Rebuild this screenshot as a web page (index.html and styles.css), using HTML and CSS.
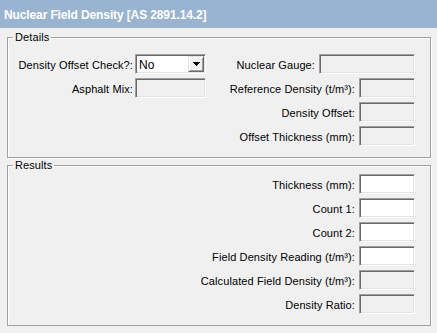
FILE: index.html
```html
<!DOCTYPE html>
<html lang="en">
<head>
    <meta charset="UTF-8">
    <meta name="viewport" content="width=device-width, initial-scale=1.0">
    <title>Nuclear Field Density</title>
    <link rel="stylesheet" href="styles.css">
</head>
<body>
    <div class="titlebar">Nuclear Field Density [AS 2891.14.2]</div>

    <fieldset class="group details">
        <legend>Details</legend>
        <div class="details-grid">
            <label class="lbl-left" for="offsetCheck">Density Offset Check?:</label>
            <div class="combo" id="offsetCheck">
                <span class="combo-text">No</span>
                <span class="combo-btn">
                    <svg width="7" height="4" viewBox="0 0 7 4"><path d="M0 0h7v1h-1v1h-1v1h-1v1h-1v-1h-1v-1h-1v-1h-1z" fill="#000"/></svg>
                </span>
            </div>
            <div class="gauge-row">
                <label for="gauge">Nuclear Gauge:</label>
                <input type="text" id="gauge" class="box locked wide" readonly>
            </div>

            <label class="lbl-left" for="asphalt">Asphalt Mix:</label>
            <input type="text" id="asphalt" class="box locked mid" readonly>
            <label class="lbl-right" for="refDensity">Reference Density (t/m³):</label>
            <input type="text" id="refDensity" class="box locked" readonly>

            <label class="lbl-right col3" for="densOffset">Density Offset:</label>
            <input type="text" id="densOffset" class="box locked" readonly>

            <label class="lbl-right col3" for="offThick">Offset Thickness (mm):</label>
            <input type="text" id="offThick" class="box locked" readonly>
        </div>
    </fieldset>

    <fieldset class="group results">
        <legend>Results</legend>
        <div class="results-grid">
            <label class="lbl-right" for="thickness">Thickness (mm):</label>
            <input type="text" id="thickness" class="box">

            <label class="lbl-right" for="count1">Count 1:</label>
            <input type="text" id="count1" class="box">

            <label class="lbl-right" for="count2">Count 2:</label>
            <input type="text" id="count2" class="box">

            <label class="lbl-right" for="fdr">Field Density Reading (t/m³):</label>
            <input type="text" id="fdr" class="box">

            <label class="lbl-right" for="cfd">Calculated Field Density (t/m³):</label>
            <input type="text" id="cfd" class="box locked" readonly>

            <label class="lbl-right" for="ratio">Density Ratio:</label>
            <input type="text" id="ratio" class="box locked" readonly>
        </div>
    </fieldset>
</body>
</html>
```

FILE: styles.css
```css
body {
    font-family: "Liberation Sans", Arial, sans-serif;
    font-size: 11px;
    letter-spacing: 0.1px;
    color: #000;
    background-color: #f0f0f0;
    margin: 0;
    padding: 0;
}
.titlebar {
    height: 26px;
    padding: 2px 0 0 4px;
    line-height: 26px;
    background-color: #99b4d1;
    color: #fff;
    font-size: 12px;
    font-weight: bold;
    letter-spacing: -0.12px;
    white-space: nowrap;
}
.group {
    margin: 2px 6px 0 7px;
    padding: 9px 15px 11px 0;
    border: 1px solid #a0a0a0;
    box-shadow: 1px 1px 0 #fff, inset 1px 1px 0 #fff;
    min-width: 0;
}
.group legend {
    margin-left: 5px;
    padding: 0 2px;
    line-height: 15px;
}
.results {
    margin-top: 0;
    padding-top: 1px;
}
.details-grid {
    display: grid;
    grid-template-columns: 127px 71px 1fr 56px;
    grid-auto-rows: 20px;
    row-gap: 4px;
    align-items: center;
}
.results-grid {
    display: grid;
    grid-template-columns: 1fr 56px;
    grid-auto-rows: 20px;
    row-gap: 4px;
    align-items: center;
}
label {
    padding-top: 1px;
    text-align: right;
    white-space: nowrap;
}
.lbl-left {
    padding-right: 2px;
}
.lbl-right {
    padding-right: 4px;
}
.col3 {
    grid-column: 3;
}
.gauge-row {
    grid-column: 3 / 5;
    display: flex;
    justify-content: flex-end;
    align-items: center;
    gap: 4px;
}
.box {
    box-sizing: border-box;
    width: 56px;
    height: 20px;
    margin: 0;
    padding: 0 3px;
    font: inherit;
    background: #fff;
    border: 1px solid;
    border-color: #a0a0a0 #fff #fff #a0a0a0;
    box-shadow: inset 1px 1px 0 #696969, inset -1px -1px 0 #e3e3e3;
    outline: none;
}
.locked {
    background: #f0f0f0;
}
.mid {
    width: 71px;
}
.wide {
    width: 96px;
}
.combo {
    box-sizing: border-box;
    width: 71px;
    height: 20px;
    display: flex;
    align-items: stretch;
    background: #fff;
    border: 1px solid;
    border-color: #a0a0a0 #fff #fff #a0a0a0;
    box-shadow: inset 1px 1px 0 #696969, inset -1px -1px 0 #e3e3e3;
    padding: 1px;
}
.combo-text {
    flex: 1;
    padding: 2px 0 0 2px;
    font-size: 12px;
    line-height: 14px;
}
.combo-btn {
    box-sizing: border-box;
    width: 16px;
    display: flex;
    align-items: center;
    justify-content: center;
    background: #f0f0f0;
    border: 1px solid;
    border-color: #e3e3e3 #696969 #696969 #e3e3e3;
    box-shadow: inset 1px 1px 0 #fff, inset -1px -1px 0 #a0a0a0;
}
```
